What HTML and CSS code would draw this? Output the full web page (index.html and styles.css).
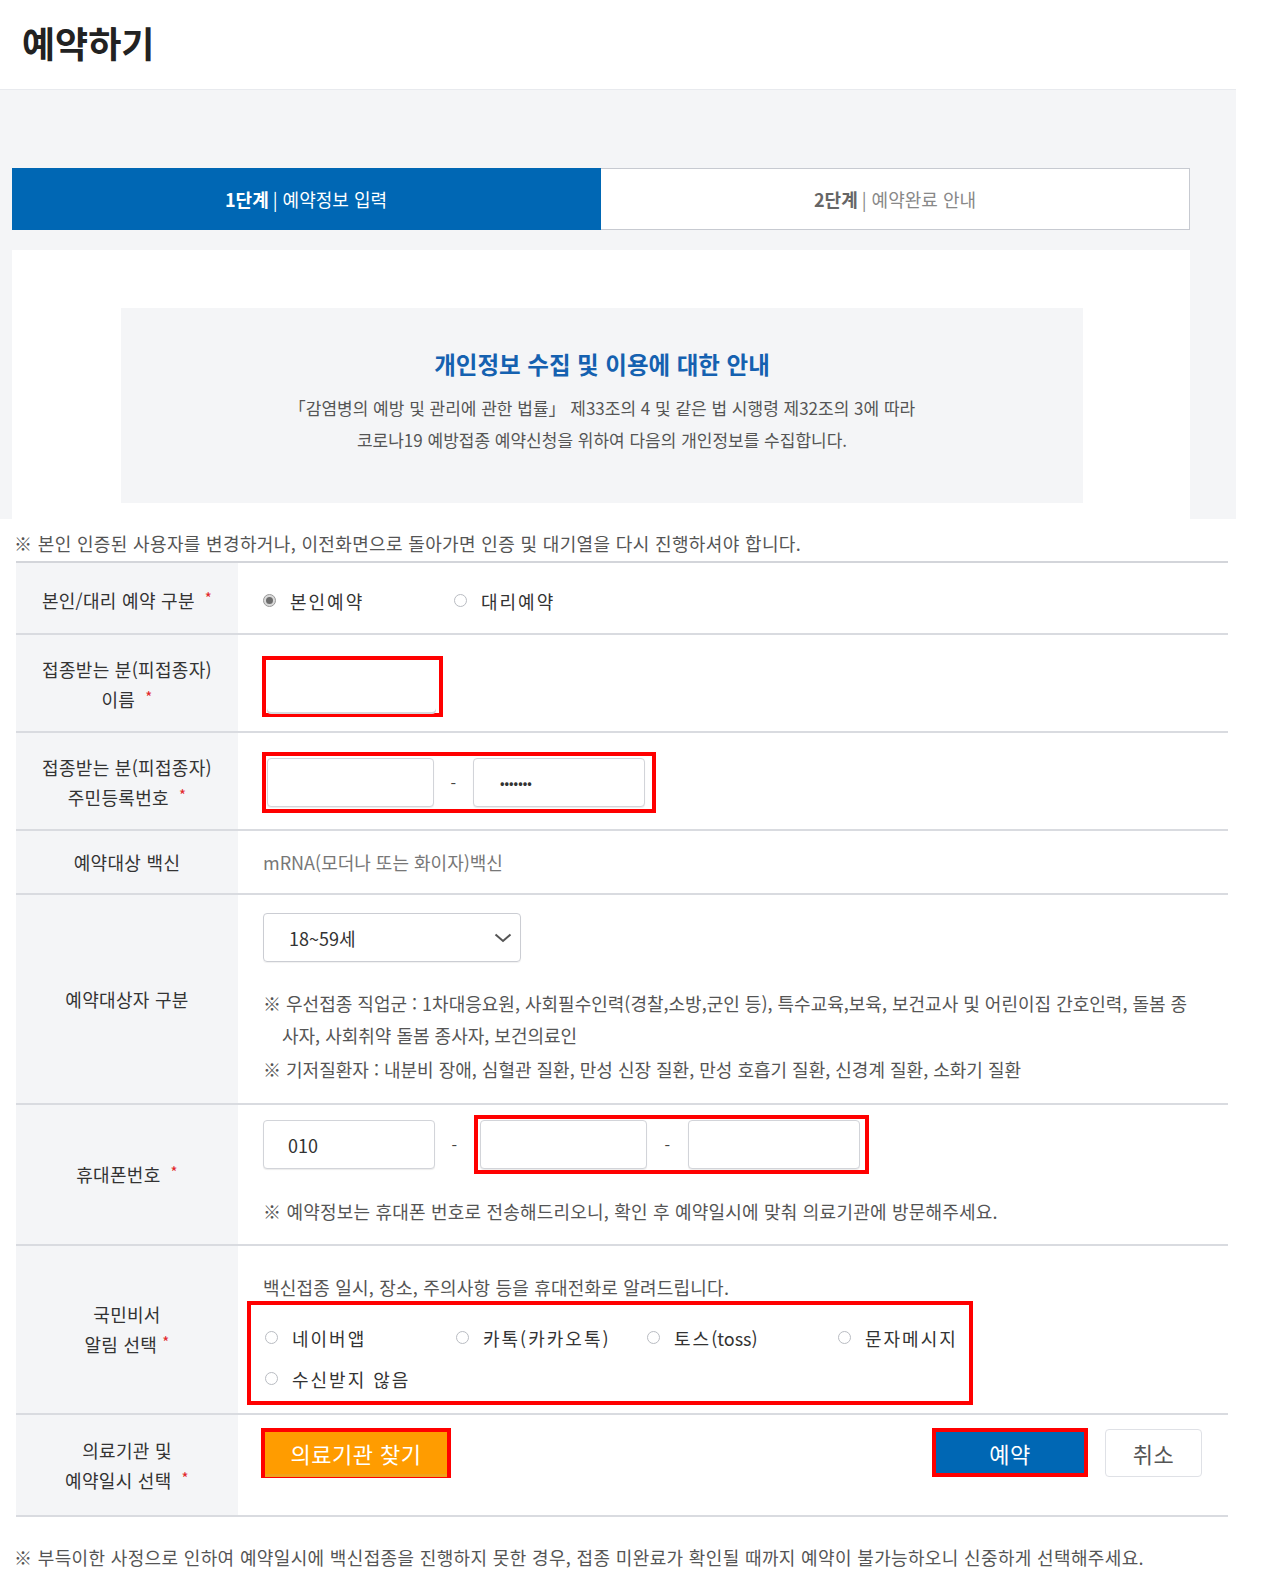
FILE: index.html
```html
<!DOCTYPE html>
<html lang="ko">
<head>
<meta charset="utf-8">
<title>예약하기</title>
<link rel="stylesheet" href="styles.css">
</head>
<body>
<header class="page-head">
  <h1 class="page-title">예약하기</h1>
</header>

<section class="band">
  <div class="steps">
    <div class="step step-on"><b>1단계</b><span class="bar">|</span>예약정보 입력</div>
    <div class="step"><b>2단계</b><span class="bar">|</span>예약완료 안내</div>
  </div>
  <div class="panel">
    <div class="notice-box">
      <h2 class="notice-title">개인정보 수집 및 이용에 대한 안내</h2>
      <p class="notice-text">「감염병의 예방 및 관리에 관한 법률」 제33조의 4 및 같은 법 시행령 제32조의 3에 따라<br>코로나19 예방접종 예약신청을 위하여 다음의 개인정보를 수집합니다.</p>
    </div>
  </div>
</section>

<p class="note note-top">※ 본인 인증된 사용자를 변경하거나, 이전화면으로 돌아가면 인증 및 대기열을 다시 진행하셔야 합니다.</p>

<div class="form">
  <div class="row row-type">
    <div class="label"><span>본인/대리 예약 구분<i class="req">*</i></span></div>
    <div class="cell">
      <div class="radios">
        <span class="radio radio-on"><span class="dot"></span>본인예약</span>
        <span class="radio"><span class="dot"></span>대리예약</span>
      </div>
    </div>
  </div>

  <div class="row row-name">
    <div class="label"><span>접종받는 분(피접종자)<br>이름<i class="req">*</i></span></div>
    <div class="cell">
      <div class="mark mark-name">
        <span class="input input-wide"></span>
      </div>
    </div>
  </div>

  <div class="row row-id">
    <div class="label"><span>접종받는 분(피접종자)<br>주민등록번호<i class="req">*</i></span></div>
    <div class="cell">
      <div class="mark mark-id">
        <span class="input input-id"></span>
        <span class="dash">-</span>
        <span class="input input-id input-pw">•••••••</span>
      </div>
    </div>
  </div>

  <div class="row row-vaccine">
    <div class="label"><span>예약대상 백신</span></div>
    <div class="cell">
      <p class="muted">mRNA(모더나 또는 화이자)백신</p>
    </div>
  </div>

  <div class="row row-target">
    <div class="label"><span>예약대상자 구분</span></div>
    <div class="cell cell-stack">
      <div class="select">
        <span>18~59세</span>
        <svg class="chev" width="18" height="10" viewBox="0 0 18 10"><polyline points="1.5,1.5 9,8 16.5,1.5" fill="none" stroke="#555" stroke-width="2"/></svg>
      </div>
      <ul class="hints">
        <li>※ 우선접종 직업군 : 1차대응요원, 사회필수인력(경찰,소방,군인 등), 특수교육,보육, 보건교사 및 어린이집 간호인력, 돌봄 종사자, 사회취약 돌봄 종사자, 보건의료인</li>
        <li>※ 기저질환자 : 내분비 장애, 심혈관 질환, 만성 신장 질환, 만성 호흡기 질환, 신경계 질환, 소화기 질환</li>
      </ul>
    </div>
  </div>

  <div class="row row-phone">
    <div class="label"><span>휴대폰번호<i class="req">*</i></span></div>
    <div class="cell cell-stack cell-phone">
      <div class="phone">
        <span class="input input-phone">010</span>
        <span class="dash">-</span>
        <div class="mark mark-phone">
          <span class="input input-phone"></span>
          <span class="dash">-</span>
          <span class="input input-phone input-phone-last"></span>
        </div>
      </div>
      <p class="hint-one">※ 예약정보는 휴대폰 번호로 전송해드리오니, 확인 후 예약일시에 맞춰 의료기관에 방문해주세요.</p>
    </div>
  </div>

  <div class="row row-alarm">
    <div class="label"><span>국민비서<br>알림 선택<i class="req req-tight">*</i></span></div>
    <div class="cell cell-stack">
      <p class="hint-alarm">백신접종 일시, 장소, 주의사항 등을 휴대전화로 알려드립니다.</p>
      <div class="mark mark-alarm">
        <div class="radio-grid">
          <span class="radio"><span class="dot"></span>네이버앱</span>
          <span class="radio"><span class="dot"></span>카톡(카카오톡)</span>
          <span class="radio"><span class="dot"></span>토스<span class="latin">(toss)</span></span>
          <span class="radio"><span class="dot"></span>문자메시지</span>
          <span class="radio"><span class="dot"></span>수신받지 않음</span>
        </div>
      </div>
    </div>
  </div>

  <div class="row row-hospital">
    <div class="label"><span>의료기관 및<br>예약일시 선택<i class="req">*</i></span></div>
    <div class="cell cell-buttons">
      <div class="mark mark-btn">
        <span class="btn btn-orange">의료기관 찾기</span>
      </div>
      <div class="actions">
        <div class="mark mark-btn">
          <span class="btn btn-blue">예약</span>
        </div>
        <span class="btn btn-white">취소</span>
      </div>
    </div>
  </div>
</div>

<p class="note note-bottom">※ 부득이한 사정으로 인하여 예약일시에 백신접종을 진행하지 못한 경우, 접종 미완료가 확인될 때까지 예약이 불가능하오니 신중하게 선택해주세요.</p>
</body>
</html>
```

FILE: styles.css
```css
* { box-sizing: border-box; }
html, body { margin: 0; padding: 0; background: #fff; }
body {
  width: 1271px;
  font-family: "Noto Sans CJK KR", "Noto Sans", sans-serif;
  color: #333;
  font-size: 18px;
  letter-spacing: 0.3px;
}
p, h1, h2, ul { margin: 0; padding: 0; }

.page-head {
  width: 1236px;
  height: 89px;
  padding: 18px 0 0 22px;
}
.page-title {
  font-size: 36px;
  font-weight: 700;
  line-height: 48px;
  letter-spacing: 0;
  color: #222;
}

.band {
  width: 1236px;
  background: #f4f5f7;
  border-top: 1px solid #e8eaee;
  padding: 78px 46px 0 12px;
}
.steps {
  display: grid;
  grid-template-columns: 1fr 1fr;
  height: 62px;
}
.step {
  display: flex;
  align-items: center;
  justify-content: center;
  background: #fff;
  border: 1px solid #c7cad1;
  border-left: none;
  color: #888;
  font-size: 18px;
  letter-spacing: 0;
}
.step b { font-weight: 700; color: #666; }
.step-on {
  background: #0067b4;
  border-color: #0067b4;
  color: #fff;
}
.step-on b { color: #fff; }
.bar { margin: 0 5px 0 4px; font-weight: 400; }

.panel {
  margin-top: 20px;
  background: #fff;
  height: 269px;
  padding: 58px 107px 0 109px;
}
.notice-box {
  background: #f4f5f7;
  height: 195px;
  text-align: center;
  padding-top: 40px;
}
.notice-title {
  font-size: 23.5px;
  font-weight: 700;
  color: #1561b0;
  line-height: 32px;
  letter-spacing: 0;
}
.notice-text {
  margin-top: 12px;
  font-size: 17px;
  line-height: 32px;
  color: #555;
  letter-spacing: 0;
}

.note {
  color: #555;
  font-size: 18px;
  line-height: 24px;
  padding-left: 14px;
  letter-spacing: 0.35px;
}
.note-top { padding-top: 12px; height: 42px; }
.note-bottom { padding-top: 28px; }

.form {
  margin-left: 16px;
  width: 1212px;
  border-top: 2px solid #d3d5da;
}
.row {
  display: flex;
  border-bottom: 2px solid #d9dbe0;
}
.label {
  flex: 0 0 222px;
  background: #f4f5f7;
  display: flex;
  align-items: center;
  justify-content: center;
  text-align: center;
  font-size: 18px;
  line-height: 30px;
  color: #333;
}
.req {
  font-style: normal;
  color: #e2262a;
  font-size: 15px;
  margin-left: 10px;
  position: relative;
  top: -4px;
}
.req-tight { margin-left: 5px; }
.cell {
  flex: 1;
  display: flex;
  align-items: center;
  padding-left: 25px;
}
.cell-stack {
  flex-direction: column;
  align-items: flex-start;
  justify-content: center;
}

.row-type { height: 72px; }
.row-type .label, .row-type .cell { padding-top: 5px; }
.row-name { height: 98px; }
.row-name .label, .row-id .label { padding-top: 4px; }
.row-id { height: 98px; }
.row-vaccine { height: 64px; }
.row-target { height: 210px; }
.row-phone { height: 141px; }
.row-alarm { height: 169px; }
.row-hospital { height: 102px; }
.row-hospital .label { padding-top: 2px; }

.radios { display: flex; }
.radio {
  display: inline-flex;
  align-items: center;
  width: 191px;
  font-size: 18px;
  color: #333;
  letter-spacing: 2px;
}
.latin { letter-spacing: 0; }
.dot {
  width: 13px;
  height: 13px;
  border-radius: 50%;
  border: 1px solid #b9bcc2;
  background: #fff;
  margin: 0 14px 0 0;
  flex: none;
  position: relative;
}
.radio-on .dot {
  border-color: #999;
  background: #d9d9d9;
}
.radio-on .dot::after {
  content: "";
  position: absolute;
  left: 2px; top: 2px;
  width: 7px; height: 7px;
  border-radius: 50%;
  background: #6d6d6d;
}

.mark {
  border: 4px solid #ff0000;
  display: flex;
  align-items: center;
  flex: none;
}
.mark-name { margin: 6px 0 0 -1px; padding: 0 3px 1px 1px; }
.mark-id { margin: 3px 0 0 -1px; padding: 2px 7px 2px 1px; }
.input {
  display: flex;
  align-items: center;
  height: 49px;
  background: #fff;
  border: 1px solid #d2d4d9;
  border-radius: 4px;
  box-shadow: 0 1px 1px rgba(0,0,0,0.08);
  padding-left: 24px;
  font-size: 18px;
  letter-spacing: 0;
  color: #333;
}
.input-wide { width: 169px; height: 52px; border-color: #fff; box-shadow: 0 2px 0 #d8d9dd; }
.input-id { width: 167px; }
.input-id + .dash + .input-id { width: 172px; }
.input-pw { font-size: 12px; letter-spacing: 0; padding-left: 26px; font-weight: 700; }
.dash {
  width: 39px;
  text-align: center;
  font-size: 16px;
  color: #444;
}

.muted { color: #777; font-size: 18px; letter-spacing: 0; }

.select {
  width: 258px;
  height: 49px;
  border: 1px solid #cbcdd3;
  border-radius: 4px;
  display: flex;
  align-items: center;
  justify-content: space-between;
  padding: 0 8px 0 25px;
  font-size: 18px;
  letter-spacing: 0;
  color: #333;
  box-shadow: 0 1px 1px rgba(0,0,0,0.06);
}
.hints {
  list-style: none;
  margin-top: 25px;
  width: 930px;
}
.hints li {
  font-size: 18px;
  line-height: 32px;
  color: #555;
  padding-left: 19px;
  text-indent: -19px;
  letter-spacing: 0;
  word-break: break-all;
}
.hints li + li { margin-top: 2px; }

.cell-phone { justify-content: flex-start; padding-top: 10px; }
.phone { display: flex; align-items: center; }
.input-phone { width: 172px; }
.mark-phone { padding: 1px 5px 1px 2px; }
.mark-phone .input-phone { width: 167px; }
.mark-phone .input-phone-last { width: 172px; }
.mark-phone .dash { width: 41px; }
.hint-one {
  margin-top: 24px;
  font-size: 18px;
  color: #555;
  letter-spacing: 0.2px;
}

.hint-alarm {
  font-size: 18px;
  color: #555;
  letter-spacing: 0.2px;
  margin-top: 19px;
}
.mark-alarm {
  margin-left: -16px;
  margin-top: 1px;
  width: 726px;
  height: 104px;
  padding: 20px 0 0 14px;
  align-items: flex-start;
}
.radio-grid {
  display: grid;
  grid-template-columns: repeat(4, 191px);
  row-gap: 15px;
}
.radio-grid .radio { height: 26px; }

.cell-buttons {
  justify-content: space-between;
  padding-right: 26px;
  align-items: flex-start;
  padding-top: 13px;
}
.mark-btn { margin-left: -2px; }
.btn {
  display: inline-flex;
  align-items: center;
  justify-content: center;
  height: 42px;
  font-size: 22px;
  letter-spacing: 0.5px;
}
.btn-orange {
  width: 182px;
  background: #ff9c00;
  color: #fff;
  box-shadow: 0 3px 0 #f0a21a;
}
.actions { display: flex; align-items: center; gap: 17px; }
.btn-blue {
  width: 148px;
  height: 41px;
  background: #0067b4;
  color: #fff;
}
.btn-white {
  width: 97px;
  height: 48px;
  border: 1px solid #dfe1e6;
  border-radius: 4px;
  color: #555;
  background: #fff;
  margin-top: 1px;
}
```
